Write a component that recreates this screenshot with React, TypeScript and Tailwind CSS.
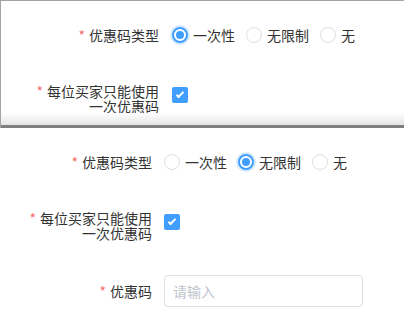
import React from "react";

type Option = { label: string; value: string };

const typeOptions: Option[] = [
  { label: "一次性", value: "once" },
  { label: "无限制", value: "unlimited" },
  { label: "无", value: "none" },
];

function Radio({ checked, label }: { checked: boolean; label: string }) {
  return (
    <label className="flex items-center mr-[11px] cursor-pointer">
      {checked ? (
        <span className="w-4 h-4 rounded-full border-2 border-[#409eff] bg-white flex items-center justify-center shadow-[0_0_0_2px_rgba(64,158,255,0.22)]">
          <span className="w-[8px] h-[8px] rounded-full bg-[#409eff]" />
        </span>
      ) : (
        <span className="w-4 h-4 rounded-full border border-[#dcdfe6] bg-white" />
      )}
      <span className="ml-[5px] text-[14px] text-[#333]">{label}</span>
    </label>
  );
}

function Checkbox() {
  return (
    <span className="w-4 h-4 rounded-[2px] bg-[#409eff] flex items-center justify-center">
      <span className="w-[4px] h-[8px] border-r-2 border-b-2 border-white rotate-45 -mt-[2px]" />
    </span>
  );
}

function Star() {
  return <span className="text-[#f56c6c] mr-[4px]">*</span>;
}

function CouponForm({ selected, labelClass, withCode }: { selected: string; labelClass: string; withCode?: boolean }) {
  return (
    <div className="flex flex-col">
      {/* 优惠码类型 */}
      <div className="flex items-center h-[32px]">
        <div className={labelClass + " text-right text-[14px] text-[#333]"}>
          <Star />
          优惠码类型
        </div>
        <div className="flex items-center">
          {typeOptions.map((o) => (
            <Radio key={o.value} checked={o.value === selected} label={o.label} />
          ))}
        </div>
      </div>

      {/* 每位买家只能使用一次优惠码 — the label is two lines, set close together */}
      <div className="flex items-start mt-[33px]">
        <div className={labelClass + " text-right text-[14px] leading-[15px] text-[#333]"}>
          <div>
            <Star />
            每位买家只能使用
          </div>
          <div>一次优惠码</div>
        </div>
        <div className="mt-[3px]">
          <Checkbox />
        </div>
      </div>

      {withCode && (
        <div className="flex items-center mt-[34px]">
          <div className={labelClass + " text-right text-[14px] text-[#333]"}>
            <Star />
            优惠码
          </div>
          <input
            placeholder="请输入"
            className="w-[199px] h-[32px] px-[8px] rounded-[4px] border border-[#dcdfe6] text-[14px] text-[#333] placeholder:text-[#c0c4cc] outline-none"
          />
        </div>
      )}
    </div>
  );
}

export default function App() {
  return (
    <div className="w-[404px] h-[314px] bg-white overflow-hidden font-['Noto_Sans_CJK_SC','Microsoft_YaHei',sans-serif]">
      {/* first capture */}
      <div className="h-[128px] flex flex-col border-l border-t border-[#a3a3a3]">
        <div className="h-[112px] pt-[18px]">
          <CouponForm selected="once" labelClass="w-[158px] mr-[13px]" />
        </div>
        <div className="h-[12px] bg-gradient-to-b from-white to-[#e4e4e4]" />
        <div className="h-[3px] bg-[#7f7f7f]" />
      </div>

      {/* second capture */}
      <div className="pt-[18px]">
        <CouponForm selected="unlimited" labelClass="w-[152px] mr-[12px]" withCode />
      </div>
    </div>
  );
}
